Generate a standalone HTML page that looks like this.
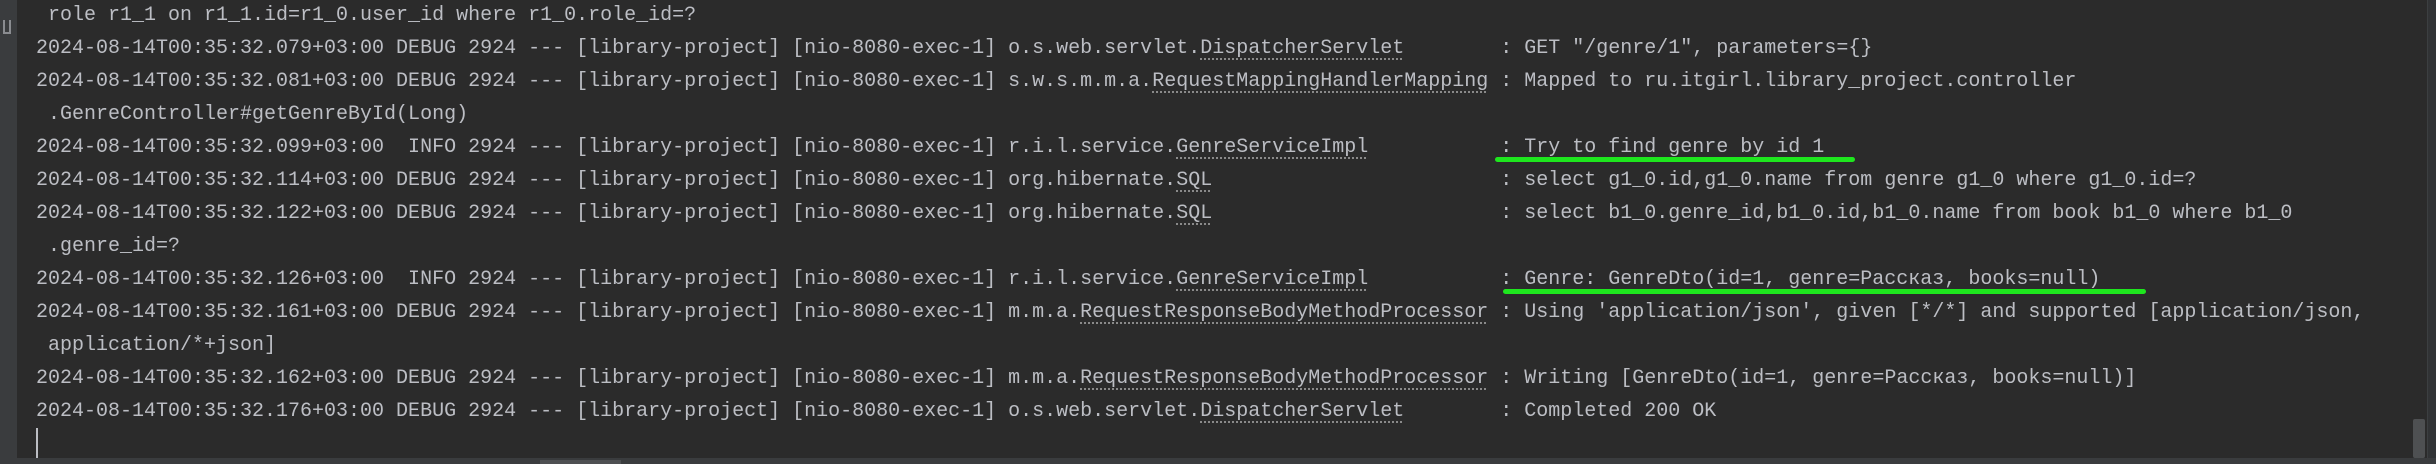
<!DOCTYPE html>
<html><head><meta charset="utf-8"><style>
html,body{margin:0;padding:0}
body{width:2436px;height:464px;background:#2b2b2b;position:relative;overflow:hidden;font-family:"Liberation Mono",monospace;font-size:20px;color:#bcbec4}
.l{position:absolute;left:36px;white-space:pre;line-height:33px;height:33px}
.u{text-decoration:underline dotted #8a8a8a;text-underline-offset:5px}
.g{position:absolute;height:5px;background:#1ee61e;border-radius:3px}
</style></head><body>
<div style="position:absolute;left:0;top:0;width:17px;height:464px;background:#3a3c3e"></div>
<div style="position:absolute;left:3px;top:20px;width:8px;height:14px;border:2px solid #8a8c90;border-top:none;box-sizing:border-box"></div>
<div class="l" style="top:-1px"> role r1_1 on r1_1.id=r1_0.user_id where r1_0.role_id=?</div>
<div class="l" style="top:32px">2024-08-14T00:35:32.079+03:00 DEBUG 2924 --- [library-project] [nio-8080-exec-1] o.s.web.servlet.<span class="u">DispatcherServlet</span>        : GET "/genre/1", parameters={}</div>
<div class="l" style="top:65px">2024-08-14T00:35:32.081+03:00 DEBUG 2924 --- [library-project] [nio-8080-exec-1] s.w.s.m.m.a.<span class="u">RequestMappingHandlerMapping</span> : Mapped to ru.itgirl.library_project.controller</div>
<div class="l" style="top:98px"> .GenreController#getGenreById(Long)</div>
<div class="l" style="top:131px">2024-08-14T00:35:32.099+03:00  INFO 2924 --- [library-project] [nio-8080-exec-1] r.i.l.service.<span class="u">GenreServiceImpl</span>           : Try to find genre by id 1</div>
<div class="l" style="top:164px">2024-08-14T00:35:32.114+03:00 DEBUG 2924 --- [library-project] [nio-8080-exec-1] org.hibernate.<span class="u">SQL</span>                        : select g1_0.id,g1_0.name from genre g1_0 where g1_0.id=?</div>
<div class="l" style="top:197px">2024-08-14T00:35:32.122+03:00 DEBUG 2924 --- [library-project] [nio-8080-exec-1] org.hibernate.<span class="u">SQL</span>                        : select b1_0.genre_id,b1_0.id,b1_0.name from book b1_0 where b1_0</div>
<div class="l" style="top:230px"> .genre_id=?</div>
<div class="l" style="top:263px">2024-08-14T00:35:32.126+03:00  INFO 2924 --- [library-project] [nio-8080-exec-1] r.i.l.service.<span class="u">GenreServiceImpl</span>           : Genre: GenreDto(id=1, genre=Рассказ, books=null)</div>
<div class="l" style="top:296px">2024-08-14T00:35:32.161+03:00 DEBUG 2924 --- [library-project] [nio-8080-exec-1] m.m.a.<span class="u">RequestResponseBodyMethodProcessor</span> : Using 'application/json', given [*/*] and supported [application/json,</div>
<div class="l" style="top:329px"> application/*+json]</div>
<div class="l" style="top:362px">2024-08-14T00:35:32.162+03:00 DEBUG 2924 --- [library-project] [nio-8080-exec-1] m.m.a.<span class="u">RequestResponseBodyMethodProcessor</span> : Writing [GenreDto(id=1, genre=Рассказ, books=null)]</div>
<div class="l" style="top:395px">2024-08-14T00:35:32.176+03:00 DEBUG 2924 --- [library-project] [nio-8080-exec-1] o.s.web.servlet.<span class="u">DispatcherServlet</span>        : Completed 200 OK</div>
<div style="position:absolute;left:36px;top:428px;width:2px;height:30px;background:#bcbec4"></div>
<div class="g" style="left:1495px;top:157px;width:360px"></div>
<div class="g" style="left:1503px;top:289px;width:643px"></div>
<div style="position:absolute;left:2413px;top:419px;width:12px;height:39px;background:#4e5052;border-radius:2px"></div>
<div style="position:absolute;left:2427px;top:0;width:9px;height:464px;background:#313335;border-left:1px solid #3c3f41"></div>
<div style="position:absolute;left:0;top:458px;width:2436px;height:6px;background:#3a3c3e"></div>
<div style="position:absolute;left:540px;top:460px;width:81px;height:4px;background:#4e5052"></div>
</body></html>
